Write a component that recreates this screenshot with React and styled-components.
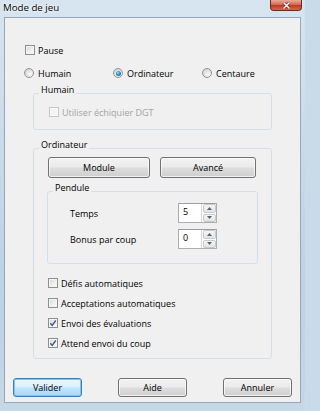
import React from 'react'
import styled, { createGlobalStyle, css } from 'styled-components'

const GlobalStyle = createGlobalStyle`
  html, body {
    margin: 0;
    padding: 0;
    background: #c9dae8;
  }
  body {
    font-family: 'Segoe UI', 'Open Sans', 'Noto Sans', sans-serif;
    font-size: 9px;
    color: #000;
  }
`

const Window = styled.div`
  width: 305px;
  height: 411px;
  box-sizing: border-box;
  display: flex;
  flex-direction: column;
  overflow: hidden;
  background: linear-gradient(180deg, #d7e5f0 0%, #c9dae8 35%, #bfd2e2 70%, #c6d7e6 100%);
`

const TitleBar = styled.div`
  height: 17px;
  display: flex;
  justify-content: space-between;
  align-items: flex-start;
`

const Title = styled.div`
  padding: 2px 0 0 3px;
  line-height: 12px;
  font-size: 9.7px;
  text-shadow: 0 0 4px #fff, 0 0 2px #fff;
`

const CloseButton = styled.div`
  width: 32px;
  height: 11px;
  margin-right: 3px;
  box-sizing: border-box;
  border: 1px solid #6b2a20;
  border-top: none;
  border-radius: 0 0 4px 4px;
  background: linear-gradient(180deg, #e9a99b 0%, #d66a55 45%, #c13b22 55%, #d4694c 100%);
  display: flex;
  align-items: center;
  justify-content: center;
`

const Client = styled.div`
  flex: 1;
  margin: 0 4px 8px;
  background: #f0f0f0;
  border: 1px solid #95a8ba;
  display: flex;
  flex-direction: column;
`

const CheckRow = styled.label`
  display: flex;
  align-items: center;
  gap: 3px;
  height: 14px;
  color: ${p => (p.$disabled ? '#a3a3a3' : '#000')};
`

const PauseRow = styled.div`
  margin-top: 25px;
  padding-left: 20px;
`

const Box = styled.span`
  width: 10px;
  height: 10px;
  box-sizing: border-box;
  display: flex;
  align-items: center;
  justify-content: center;
  border: 1px solid ${p => (p.$disabled ? '#c6c6c6' : '#8e8f8f')};
  background: ${p =>
    p.$disabled
      ? '#f4f4f4'
      : 'linear-gradient(135deg, #d6d6d6 0%, #f0f0f0 60%, #fdfdfd 100%)'};
  box-shadow: inset 0 0 0 1px ${p => (p.$disabled ? '#fafafa' : '#f4f4f4')};
`

const RadioRow = styled.div`
  display: grid;
  grid-template-columns: 89px 89px 1fr;
  margin-top: 9px;
  padding-left: 19px;
  height: 14px;
`

const RadioLabel = styled.label`
  display: flex;
  align-items: center;
  gap: 4px;
`

const RadioMark = styled.span`
  width: 10px;
  height: 10px;
  box-sizing: border-box;
  border-radius: 50%;
  border: 1px solid #939393;
  background: radial-gradient(circle at 65% 70%, #fbfbfb 0%, #e2e2e2 50%, #c9c9c9 100%);
  display: flex;
  align-items: center;
  justify-content: center;
  ${p =>
    p.$on &&
    css`
      &::after {
        content: '';
        width: 5px;
        height: 5px;
        border-radius: 50%;
        background: radial-gradient(circle at 40% 35%, #9de0fb 0%, #2a8fcf 45%, #14507f 100%);
      }
    `}
`

const Group = styled.fieldset`
  margin: ${p => p.$top}px 0 0 ${p => p.$left}px;
  width: ${p => p.$width}px;
  box-sizing: border-box;
  padding: 0;
  min-width: 0;
  border: 1px solid #d5dfe5;
  border-radius: 3px;
`

const GroupTitle = styled.legend`
  margin-left: 5px;
  padding: 0 2px 6px;
  line-height: 12px;
`

const GroupBody = styled.div`
  display: flex;
  flex-direction: column;
  padding: ${p => p.$pad};
`

const ButtonPair = styled.div`
  display: flex;
  gap: 10px;
`

const PushButton = styled.div`
  width: ${p => p.$width}px;
  height: ${p => p.$height}px;
  box-sizing: border-box;
  display: flex;
  align-items: center;
  justify-content: center;
  border: 1px solid #707070;
  border-radius: 3px;
  background: linear-gradient(180deg, #f2f2f2 0%, #ebebeb 48%, #dddddd 52%, #cfcfcf 100%);
  box-shadow: inset 0 0 0 1px rgba(255, 255, 255, 0.7);
  ${p =>
    p.$default &&
    css`
      border-color: #3c7fb1;
      background: linear-gradient(180deg, #eaf6fd 0%, #d9f0fc 48%, #bee6fd 52%, #a7d9f5 100%);
      box-shadow: inset 0 0 0 1px #7fc6ee;
    `}
`

const SpinRows = styled.div`
  display: flex;
  flex-direction: column;
  gap: 6px;
`

const SpinRow = styled.div`
  display: grid;
  grid-template-columns: 108px 39px;
  align-items: center;
  height: 20px;
`

const Spin = styled.div`
  display: flex;
  width: 39px;
  height: 20px;
  box-sizing: border-box;
  border: 1px solid #abadb3;
  border-top-color: #9a9ca3;
  background: #fff;
`

const SpinValue = styled.span`
  flex: 1;
  padding: 1px 0 0 4px;
  line-height: 14px;
`

const SpinButtons = styled.div`
  width: 13px;
  display: flex;
  flex-direction: column;
  gap: 1px;
  padding: 0 0 0 1px;
  border-left: 1px solid #d9d9d9;
`

const SpinArrow = styled.span`
  flex: 1;
  display: flex;
  align-items: center;
  justify-content: center;
  border: 1px solid #c9c9c9;
  border-radius: 2px;
  background: linear-gradient(180deg, #f6f6f6 0%, #e4e4e4 100%);
`

const CheckList = styled.div`
  display: flex;
  flex-direction: column;
  gap: 6px;
  margin-top: 12px;
`

const DialogButtons = styled.div`
  display: flex;
  justify-content: space-between;
  margin-top: 19px;
  padding: 0 8px;
`

const Check = ({ checked, disabled, children }) => (
  <CheckRow $disabled={disabled}>
    <Box $disabled={disabled}>
      {checked && (
        <svg width="8" height="8" viewBox="0 0 8 8">
          <path d="M1.3 4.2 L3.2 6.3 L6.8 1.5" fill="none" stroke="#3f5898" strokeWidth="1.4" />
        </svg>
      )}
    </Box>
    {children}
  </CheckRow>
)

const Radio = ({ on, children }) => (
  <RadioLabel>
    <RadioMark $on={on} />
    {children}
  </RadioLabel>
)

const SpinBox = ({ value }) => (
  <Spin>
    <SpinValue>{value}</SpinValue>
    <SpinButtons>
      <SpinArrow>
        <svg width="5" height="3" viewBox="0 0 5 3">
          <path d="M0 3 L2.5 0 L5 3 Z" fill="#56637a" />
        </svg>
      </SpinArrow>
      <SpinArrow>
        <svg width="5" height="3" viewBox="0 0 5 3">
          <path d="M0 0 L2.5 3 L5 0 Z" fill="#56637a" />
        </svg>
      </SpinArrow>
    </SpinButtons>
  </Spin>
)

export default function App() {
  return (
    <>
      <GlobalStyle />
      <Window>
        <TitleBar>
          <Title>Mode de jeu</Title>
          <CloseButton>
            <svg width="9" height="7" viewBox="0 0 9 7">
              <path d="M1.5 0.5 L7.5 6.5 M7.5 0.5 L1.5 6.5" stroke="#5a1f16" strokeWidth="2.6" />
              <path d="M1.5 0.5 L7.5 6.5 M7.5 0.5 L1.5 6.5" stroke="#fff" strokeWidth="1.5" />
            </svg>
          </CloseButton>
        </TitleBar>
        <Client>
          <PauseRow>
            <Check>Pause</Check>
          </PauseRow>
          <RadioRow>
            <Radio>Humain</Radio>
            <Radio on>Ordinateur</Radio>
            <Radio>Centaure</Radio>
          </RadioRow>

          <Group $top={4} $left={28} $width={239}>
            <GroupTitle>Humain</GroupTitle>
            <GroupBody $pad="3px 0 10px 15px">
              <Check disabled>Utiliser échiquier DGT</Check>
            </GroupBody>
          </Group>

          <Group $top={9} $left={28} $width={239}>
            <GroupTitle>Ordinateur</GroupTitle>
            <GroupBody $pad="0 0 8px 14px">
              <ButtonPair>
                <PushButton $width={102} $height={21}>Module</PushButton>
                <PushButton $width={96} $height={21}>Avancé</PushButton>
              </ButtonPair>

              <Group $top={4} $left={-1} $width={211}>
                <GroupTitle>Pendule</GroupTitle>
                <GroupBody $pad="3px 0 14px 22px">
                  <SpinRows>
                    <SpinRow>
                      <span>Temps</span>
                      <SpinBox value="5" />
                    </SpinRow>
                    <SpinRow>
                      <span>Bonus par coup</span>
                      <SpinBox value="0" />
                    </SpinRow>
                  </SpinRows>
                </GroupBody>
              </Group>

              <CheckList>
                <Check>Défis automatiques</Check>
                <Check>Acceptations automatiques</Check>
                <Check checked>Envoi des évaluations</Check>
                <Check checked>Attend envoi du coup</Check>
              </CheckList>
            </GroupBody>
          </Group>

          <DialogButtons>
            <PushButton $width={69} $height={19} $default>Valider</PushButton>
            <PushButton $width={69} $height={19}>Aide</PushButton>
            <PushButton $width={69} $height={19}>Annuler</PushButton>
          </DialogButtons>
        </Client>
      </Window>
    </>
  )
}
